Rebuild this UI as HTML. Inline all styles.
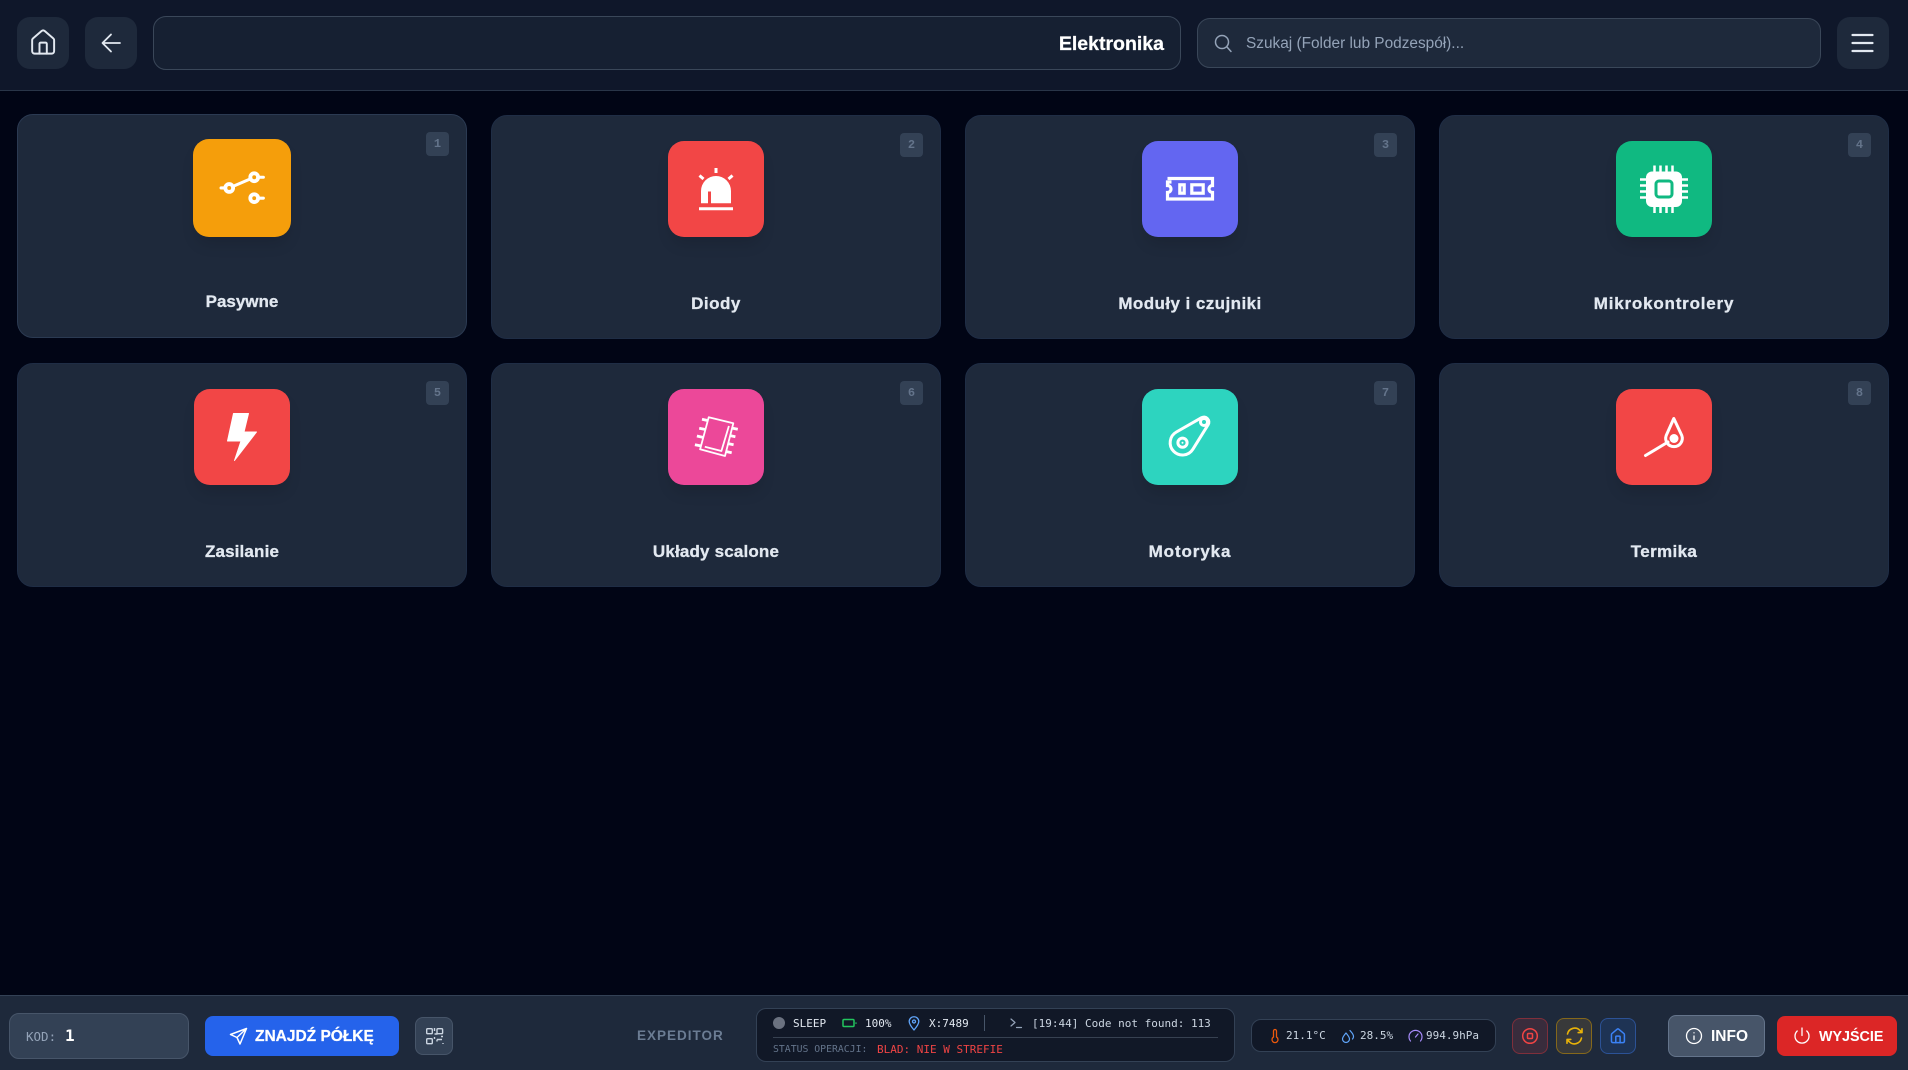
<!DOCTYPE html>
<html lang="pl"><head><meta charset="utf-8"><title>Elektronika</title>
<style>
*{box-sizing:border-box;margin:0;padding:0}
html,body{width:1908px;height:1070px;overflow:hidden;background:#010515;font-family:"Liberation Sans","Noto Sans CJK SC",sans-serif;color:#e2e8f0}
.a{position:absolute}
.t{position:absolute;white-space:nowrap;line-height:20px;height:20px}
.m{font-family:"DejaVu Sans Mono","Liberation Mono",monospace}
.btn{position:absolute;background:#1e293b;border-radius:13px;width:52px;height:52px;top:17px}
.card{position:absolute;width:450px;height:224px;background:#1e293b;border:1px solid #1f2d45;border-radius:16px}
.ic{position:absolute;left:176px;top:25px;width:96px;height:96px;border-radius:16px;box-shadow:0 10px 15px -3px rgba(0,0,0,.12)}
.lab{position:absolute;left:0;right:0;top:178px;text-align:center;font-weight:700;font-size:17px;line-height:20px;color:#e2e8f0;-webkit-text-stroke:.3px #e2e8f0}
.num{position:absolute;right:17px;top:17px;width:23px;height:24px;background:#334155;border-radius:4px;color:#64748b;font:700 12px/24px "Liberation Mono",monospace;text-align:center}
</style></head><body>
<div class="a" style="left:0;top:0;width:1908px;height:91px;background:#0f172a;border-bottom:1px solid #293548"></div>
<div class="btn" style="left:17px"></div>
<div class="btn" style="left:85px"></div>
<div class="a" style="left:153px;top:16px;width:1028px;height:54px;background:#162032;border:1px solid #3a4759;border-radius:13px"></div>
<div class="t" style="right:744px;top:34px;font-size:19.5px;font-weight:700;color:#fff;-webkit-text-stroke:.25px #fff">Elektronika</div>
<div class="a" style="left:1197px;top:18px;width:624px;height:50px;background:#1e293b;border:1px solid #3a4759;border-radius:13px"></div>
<div class="t" style="left:1246px;top:34px;font-size:15.4px;color:#94a3b8">Szukaj (Folder lub Podzespół)...</div>
<div class="btn" style="left:1837px"></div>

<div class="card" style="left:17px;top:114px;border-color:#2b3a52"><div class="ic" style="background:#f59e0b;left:175px;top:24px;width:98px;height:98px"></div><div class="lab" style="top:177px">Pasywne</div><div class="num">1</div></div>
<div class="card" style="left:491px;top:115px"><div class="ic" style="background:#f24646"></div><div class="lab" style="letter-spacing:.5px">Diody</div><div class="num">2</div></div>
<div class="card" style="left:965px;top:115px"><div class="ic" style="background:#6366f1"></div><div class="lab" style="letter-spacing:.43px">Moduły i czujniki</div><div class="num">3</div></div>
<div class="card" style="left:1439px;top:115px"><div class="ic" style="background:#10b981"></div><div class="lab" style="letter-spacing:.8px">Mikrokontrolery</div><div class="num">4</div></div>
<div class="card" style="left:17px;top:363px"><div class="ic" style="background:#f24646"></div><div class="lab" style="letter-spacing:.15px">Zasilanie</div><div class="num">5</div></div>
<div class="card" style="left:491px;top:363px"><div class="ic" style="background:#ec4899"></div><div class="lab" style="letter-spacing:.17px">Układy scalone</div><div class="num">6</div></div>
<div class="card" style="left:965px;top:363px"><div class="ic" style="background:#2dd4bf"></div><div class="lab" style="letter-spacing:.9px">Motoryka</div><div class="num">7</div></div>
<div class="card" style="left:1439px;top:363px"><div class="ic" style="background:#f24646"></div><div class="lab" style="letter-spacing:.35px">Termika</div><div class="num">8</div></div>

<div class="a" style="left:0;top:995px;width:1908px;height:75px;background:#1e293b;border-top:1px solid #334155"></div>
<div class="a" style="left:9px;top:1013px;width:180px;height:46px;background:#334155;border:1px solid #475569;border-radius:10px"></div>
<div class="t m" style="left:26px;top:1027px;font-size:12.5px;color:#94a3b8">KOD:</div>
<div class="t m" style="left:65px;top:1026px;font-size:16px;font-weight:700;color:#fff">1</div>
<div class="a" style="left:205px;top:1016px;width:194px;height:40px;background:#2563eb;border-radius:8px"></div>
<div class="t" style="left:255px;top:1027px;font-size:15.5px;font-weight:700;color:#fff;-webkit-text-stroke:.25px #fff">ZNAJDŹ PÓŁKĘ</div>
<div class="a" style="left:415px;top:1017px;width:38px;height:38px;background:#334155;border:1px solid #475569;border-radius:8px"></div>
<div class="t" style="left:637px;top:1026px;font-size:13.5px;font-weight:700;letter-spacing:1px;color:#6b7c93">EXPEDITOR</div>

<div class="a" style="left:756px;top:1008px;width:479px;height:54px;background:#111827;border:1px solid #334155;border-radius:10px"></div>
<div class="a" style="left:773px;top:1037px;width:445px;height:1px;background:#374151"></div>
<div class="a" style="left:984px;top:1015px;width:1px;height:16px;background:#475569"></div>
<div class="a" style="left:773px;top:1017px;width:12px;height:12px;border-radius:50%;background:#6b7280"></div>
<div class="t m" style="left:793px;top:1014px;font-size:11px;color:#e2e8f0">SLEEP</div>
<div class="t m" style="left:865px;top:1014px;font-size:11px;color:#e2e8f0">100%</div>
<div class="t m" style="left:929px;top:1014px;font-size:11px;color:#e2e8f0">X:7489</div>
<div class="t m" style="left:1032px;top:1014px;font-size:11px;color:#cbd5e1">[19:44] Code not found: 113</div>
<div class="t m" style="left:773px;top:1040px;font-size:9.8px;color:#64748b">STATUS OPERACJI:</div>
<div class="t m" style="left:877px;top:1040px;font-size:11px;color:#ef4444">BLAD: NIE W STREFIE</div>

<div class="a" style="left:1251px;top:1019px;width:245px;height:33px;background:#111827;border:1px solid #334155;border-radius:10px"></div>
<div class="t m" style="left:1286px;top:1026px;font-size:11px;color:#cbd5e1">21.1°C</div>
<div class="t m" style="left:1360px;top:1026px;font-size:11px;color:#cbd5e1">28.5%</div>
<div class="t m" style="left:1426px;top:1026px;font-size:11px;color:#cbd5e1">994.9hPa</div>

<div class="a" style="left:1512px;top:1018px;width:36px;height:36px;background:#392c3c;border:1px solid #7f2f3b;border-radius:8px"></div>
<div class="a" style="left:1556px;top:1018px;width:36px;height:36px;background:#38393a;border:1px solid #85681b;border-radius:8px"></div>
<div class="a" style="left:1600px;top:1018px;width:36px;height:36px;background:#1e3354;border:1px solid #2c5296;border-radius:8px"></div>
<div class="a" style="left:1668px;top:1015px;width:97px;height:42px;background:#475569;border:1px solid #64748b;border-radius:8px"></div>
<div class="t" style="left:1711px;top:1027px;font-size:15.5px;font-weight:700;color:#fff">INFO</div>
<div class="a" style="left:1777px;top:1016px;width:120px;height:40px;background:#dc2626;border-radius:8px"></div>
<div class="t" style="left:1819px;top:1027px;font-size:14.3px;font-weight:700;color:#fff">WYJŚCIE</div>

<svg class="a" style="left:0;top:0;pointer-events:none" width="1908" height="1070" viewBox="0 0 1908 1070" fill="none" stroke-linecap="round" stroke-linejoin="round">
<!-- top icons -->
<g transform="translate(28.500 28) scale(1.22)" stroke="#e2e8f0" stroke-width="1.600"><path d="M15 21v-8a1 1 0 0 0-1-1h-4a1 1 0 0 0-1 1v8"/><path d="M3 10a2 2 0 0 1 .709-1.528l7-6a2 2 0 0 1 2.582 0l7 6A2 2 0 0 1 21 10v9a2 2 0 0 1-2 2H5a2 2 0 0 1-2-2z"/></g>
<path d="M111 34.500l-8.500 8.500 8.500 8.500M102.500 43H120" stroke="#e2e8f0" stroke-width="1.800"/>
<g stroke="#94a3b8" stroke-width="1.500"><circle cx="1222" cy="42" r="6.500"/><path d="M1227 47l4 4.500"/></g>
<path d="M1852.500 35h20M1852.500 43h20M1852.500 51h20" stroke="#e2e8f0" stroke-width="2.200"/>

<!-- card 1 -->
<g transform="translate(193 139) scale(1.02)" stroke="#fff" stroke-width="3.800"><circle cx="35.500" cy="48" r="3.800"/><circle cx="60" cy="37.500" r="3.800"/><circle cx="60" cy="58" r="3.800"/><path d="M27.500 48h3.500M39.500 46.300L56 39.200M64.200 37.500H69M64.200 58H69" stroke-width="3"/></g>
<!-- card 2 -->
<g transform="translate(668 141)" fill="#fff"><path d="M33 62.300V50a15 15 0 0 1 30 0v12.300z"/><rect x="40" y="50.500" width="3" height="12" fill="#f24646"/><g stroke="#fff" stroke-width="3" stroke-linecap="butt" fill="none"><path d="M31 67.700h34"/><path d="M48 27v5M31.500 34.500l4 3.500M64.500 34.500l-4 3.500"/></g></g>
<!-- card 3 -->
<g transform="translate(1142 141)" stroke="#fff" stroke-width="3.200" stroke-linecap="butt" stroke-linejoin="miter"><path d="M25.500 37.500H70.500V44.500a3.500 3.500 0 0 0 0 7V58H25.500V51.500a3.500 3.500 0 0 0 0-7V41h4"/><rect x="37.800" y="43.800" width="4.400" height="8.400"/><rect x="49.800" y="43.800" width="11.400" height="8.400"/></g>
<!-- card 4 -->
<g transform="translate(1616 141)"><rect x="30" y="30.500" width="36" height="35.500" rx="6" fill="#fff"/><rect x="40" y="40" width="16" height="16" rx="3" fill="#fff" stroke="#10b981" stroke-width="3"/><path d="M38.500 24.500v7M44.500 24.500v7M50.500 24.500v7M56.500 24.500v7M38.500 65v7M44.500 65v7M50.500 65v7M56.500 65v7M24 38.500h7M24 44.500h7M24 50.500h7M24 56.500h7M65 38.500h7M65 44.500h7M65 50.500h7M65 56.500h7" stroke="#fff" stroke-width="2.500" stroke-linecap="butt"/></g>
<!-- card 5 -->
<g transform="translate(194 389)"><path d="M39.500 24.500H54.500L50 43H62.500L40.500 71.500L47 52H33.500Z" fill="#fff" stroke="#fff" stroke-width="1"/></g>
<!-- card 6 -->
<g transform="translate(668 389)" stroke="#fff" stroke-width="1.800" stroke-linecap="butt"><path d="M40.700 28.300L65.300 34.300L57 67L32.100 60.300Z"/><path d="M60.900 37L53.400 62L36.800 57.700"/><path d="M34 30.300L39.500 31.500M31.200 39.300L37.500 40.500M28.900 47L35.500 48.500M26.900 55.700L33.500 57M69.800 40.300L63.500 39M67.400 47.700L61.500 46.500M65.600 55.700L59.500 54.500M63.700 63.700L58 62.500" stroke-width="2.800"/></g>
<!-- card 7 -->
<g transform="translate(1142 389)" stroke="#fff" stroke-width="3"><path d="M34.400 43L59.500 28.700A5 5 0 0 1 66.200 35.600L50.900 60.200A12.300 12.300 0 1 1 34.400 43Z"/><circle cx="40.500" cy="53.700" r="4.600"/><circle cx="40.500" cy="53.700" r="1" fill="#fff" stroke="none"/><circle cx="62" cy="33" r="5" fill="#fff" stroke="none"/><circle cx="62" cy="33" r="2" fill="#2dd4bf" stroke="none"/></g>
<!-- card 8 -->
<g transform="translate(1616 389)" stroke="#fff" stroke-width="3"><path d="M57.800 29.500L65.800 46.500a8.300 8.300 0 1 1-15.600 0Z"/><circle cx="58" cy="49.500" r="4.500" fill="#fff" stroke="none"/><path d="M29.500 66.500L52 53"/></g>

<!-- footer -->
<g stroke="#fff" stroke-width="1.500"><path d="M246.500 1028.500L230.500 1034.500L237 1037.500L240 1044ZM237 1037.500L246.500 1028.500"/></g>
<g stroke="#cbd5e1" stroke-width="1.400" stroke-linecap="butt"><rect x="426.700" y="1028.700" width="5.600" height="5" rx="1"/><rect x="437" y="1028.700" width="5.600" height="5" rx="1"/><rect x="426.700" y="1038.700" width="5.600" height="5" rx="1"/><path d="M434.500 1028v3M434.500 1034h3M441 1036.500h2M437 1039.500h5M437 1039.500v2M443 1043v1M434.500 1037v2"/></g>
<g stroke="#22c55e" stroke-width="1.500"><rect x="843" y="1019.500" width="11" height="7" rx="1"/><path d="M856 1023v.1"/></g>
<g stroke="#60a5fa" stroke-width="1.300"><path d="M914 1030C911 1026.500 909.200 1024 909.200 1021.500a4.800 4.800 0 0 1 9.600 0C918.800 1024 917 1026.500 914 1030Z"/><circle cx="914" cy="1021.500" r="1.500"/></g>
<path d="M1011 1019l4 3.500-4 3.500M1016.500 1027.500h5" stroke="#94a3b8" stroke-width="1.200"/>
<g stroke="#ea580c" stroke-width="1.300"><path d="M1273.500 1037v-6a1.500 1.500 0 0 1 3 0v6a3 3 0 1 1-3 0Z"/></g>
<g stroke="#60a5fa" stroke-width="1.200"><path d="M1346 1033c-2 2.500-3.500 4-3.500 6a3.500 3.500 0 0 0 7 0c0-2-1.500-3.500-3.500-6ZM1350 1030.500c1.500 2 3.500 3.500 3.500 6 0 1-.4 2-1 2.500"/></g>
<g stroke="#a78bfa" stroke-width="1.200"><path d="M1410.500 1041a6.500 6.500 0 1 1 10 0M1415.500 1037l2.500-3"/></g>
<g stroke="#ef4444" stroke-width="1.500"><circle cx="1530" cy="1036" r="7.300"/><rect x="1527.500" y="1033.500" width="5" height="5" rx="1"/></g>
<g stroke="#eab308" stroke-width="1.600"><path d="M1567.500 1034a7.300 7.300 0 0 1 12.500-3.500l2 2M1582 1028.800v3.800h-3.800M1581.500 1038a7.300 7.300 0 0 1-12.500 3.500l-2-2M1567 1043.200v-3.800h3.800"/></g>
<g transform="translate(1609.300 1027.500) scale(.72)" stroke="#3b82f6" stroke-width="2.100"><path d="M15 21v-8a1 1 0 0 0-1-1h-4a1 1 0 0 0-1 1v8"/><path d="M3 10a2 2 0 0 1 .709-1.528l7-6a2 2 0 0 1 2.582 0l7 6A2 2 0 0 1 21 10v9a2 2 0 0 1-2 2H5a2 2 0 0 1-2-2z"/></g>
<g stroke="#fff" stroke-width="1.300"><circle cx="1694" cy="1036" r="7.500"/><path d="M1694 1036v3.500M1694 1032.800v.1"/></g>
<g stroke="#fff" stroke-width="1.300"><path d="M1802 1028v7.500M1806.800 1031a7 7 0 1 1-9.600 0"/></g>
</svg>
</body></html>
